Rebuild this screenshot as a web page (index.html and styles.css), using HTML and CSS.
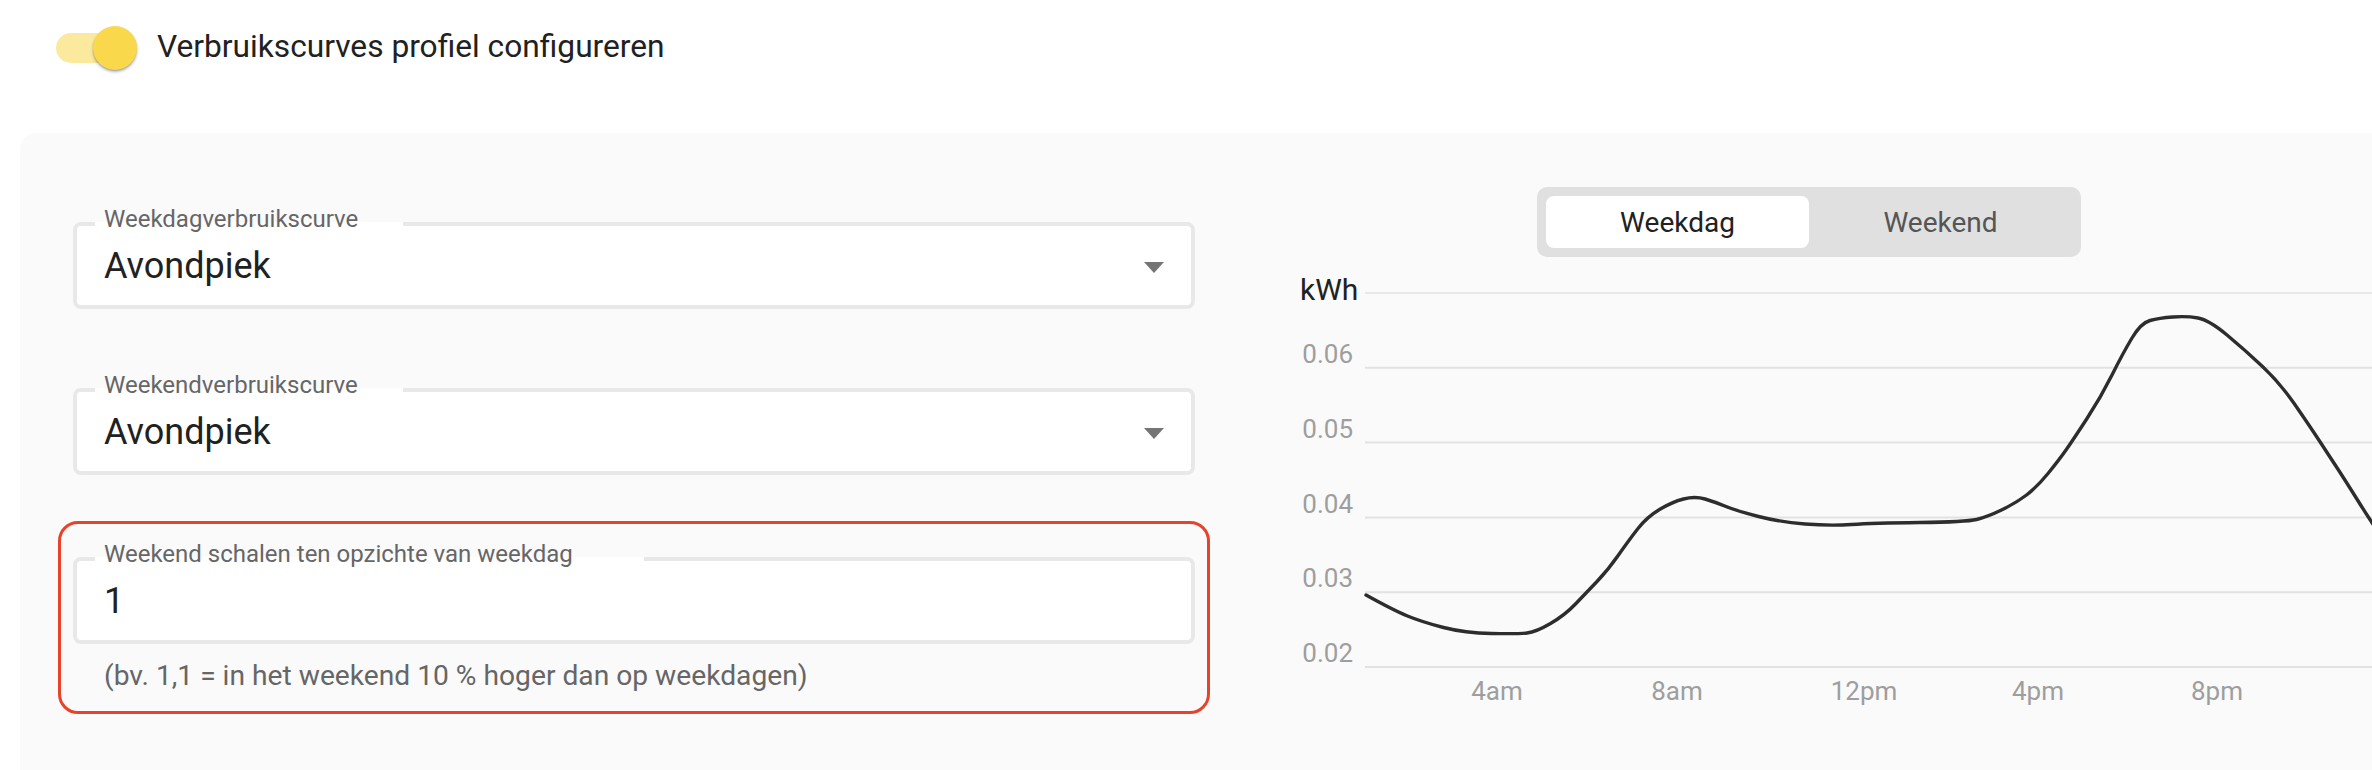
FILE: index.html
```html
<!DOCTYPE html>
<html lang="nl">
<head>
<meta charset="utf-8">
<title>Verbruikscurves</title>
<link rel="stylesheet" href="styles.css">
</head>
<body>
<header class="top">
  <span class="switch"><span class="switch-track"></span><span class="switch-thumb"></span></span>
  <span class="top-label">Verbruikscurves profiel configureren</span>
</header>
<section class="panel">
  <div class="form-col">
    <div class="field-box">
      <span class="field-label notch-sm">Weekdagverbruikscurve</span>
      <span class="field-value">Avondpiek</span>
      <span class="select-arrow"></span>
    </div>
    <div class="field-box field-gap">
      <span class="field-label notch-sm">Weekendverbruikscurve</span>
      <span class="field-value">Avondpiek</span>
      <span class="select-arrow"></span>
    </div>
    <div class="highlight">
      <div class="field-box">
        <span class="field-label notch-lg">Weekend schalen ten opzichte van weekdag</span>
        <span class="field-value">1</span>
      </div>
      <p class="helper">(bv. 1,1 = in het weekend 10 % hoger dan op weekdagen)</p>
    </div>
  </div>
  <div class="chart-col">
    <div class="seg">
      <span class="seg-btn seg-active">Weekdag</span>
      <span class="seg-btn">Weekend</span>
    </div>
    <svg class="chart" viewBox="0 0 1072 455" width="1072" height="455">
      <line class="grid grid-top" x1="65" y1="33" x2="1072" y2="33"/>
      <line class="grid" x1="65" y1="107.8" x2="1072" y2="107.8"/>
      <line class="grid" x1="65" y1="182.6" x2="1072" y2="182.6"/>
      <line class="grid" x1="65" y1="257.4" x2="1072" y2="257.4"/>
      <line class="grid" x1="65" y1="332.2" x2="1072" y2="332.2"/>
      <line class="grid" x1="65" y1="407" x2="1072" y2="407"/>
      <text class="unit" x="0" y="40">kWh</text>
      <text class="ytick" x="53" y="103">0.06</text>
      <text class="ytick" x="53" y="177.8">0.05</text>
      <text class="ytick" x="53" y="252.6">0.04</text>
      <text class="ytick" x="53" y="327.4">0.03</text>
      <text class="ytick" x="53" y="402.2">0.02</text>
      <text class="xtick" x="197" y="440">4am</text>
      <text class="xtick" x="377" y="440">8am</text>
      <text class="xtick" x="564" y="440">12pm</text>
      <text class="xtick" x="738" y="440">4pm</text>
      <text class="xtick" x="917" y="440">8pm</text>
      <path class="curve" d="M66,335 Q93,350 107.5,356 Q122,362 143.5,367.5 Q165,373 191.5,373.5 Q218,374 227,373 Q236,372 250.5,363.5 Q265,355 275.5,344 Q286,333 297,321.5 Q308,310 318.5,295 Q329,280 338,268.5 Q347,257 359.5,249.5 Q372,242 383.5,239 Q395,236 405,239 Q415,242 426,246.5 Q437,251 458.5,256.5 Q480,262 505,264 Q530,266 551.5,264.5 Q573,263 619.5,262.5 Q666,262 676.5,259.5 Q687,257 701.5,250 Q716,243 726.5,235 Q737,227 748,213.5 Q759,200 766,190 Q773,180 787,158.5 Q801,137 812,115 Q823,93 832,78 Q841,63 850,60.5 Q859,58 873,57 Q887,56 898,58 Q909,60 927,75 Q945,90 962.5,106.5 Q980,123 994.5,144 Q1009,165 1019.5,181 Q1030,197 1037.5,208.5 Q1045,220 1057.5,240 Q1070,260 1085,282.5 L1100,305"/>
    </svg>
  </div>
</section>
</body>
</html>
```
FILE: styles.css
```css
* { box-sizing: border-box; }
html, body { margin: 0; padding: 0; overflow: hidden; background: #ffffff; }
body {
  width: 2372px;
  height: 770px;
  font-family: Roboto, "Noto Sans", "Liberation Sans", sans-serif;
  color: #212121;
}

.top {
  display: flex;
  align-items: flex-start;
  gap: 20px;
  height: 133px;
  padding: 26px 0 0 56px;
}
.switch { position: relative; flex: none; width: 81px; height: 44px; }
.switch-track {
  position: absolute; left: 0; top: 7px;
  width: 75px; height: 30px; border-radius: 15px;
  background: #fbe99e;
}
.switch-thumb {
  position: absolute; right: 0; top: 0;
  width: 44px; height: 44px; border-radius: 50%;
  background: #f9d94b;
  box-shadow: 0 2px 3px rgba(0,0,0,0.28), 0 1px 1px rgba(0,0,0,0.12);
}
.top-label { font-size: 31.7px; line-height: 42px; color: #212121; }

.panel {
  display: flex;
  gap: 105px;
  height: 637px;
  margin-left: 20px;
  padding: 0 0 0 53px;
  background: #fafafa;
  border-top-left-radius: 16px;
  overflow: hidden;
}
.form-col { flex: none; width: 1122px; display: flex; flex-direction: column; padding-top: 89px; }

.field-box {
  position: relative;
  display: flex;
  align-items: center;
  height: 87px;
  padding: 0 27px;
  border: 4px solid #e8e8e8;
  border-radius: 8px;
  background: #ffffff;
}
.field-gap { margin-top: 79px; }
.field-label {
  position: absolute;
  left: 18px;
  top: -19px;
  padding-left: 9px;
  font-size: 24px;
  line-height: 24px;
  color: #666666;
  white-space: nowrap;
  background: linear-gradient(to bottom, transparent 15px, #ffffff 15px);
}
.notch-sm { width: 308px; }
.notch-lg { width: 549px; }
.field-value { flex: 1; font-size: 36px; color: #212121; }
.select-arrow {
  width: 0; height: 0;
  margin-top: 3px;
  border-left: 10.5px solid transparent;
  border-right: 10.5px solid transparent;
  border-top: 11px solid #757575;
}

.highlight {
  margin: 46px -15px 0;
  padding: 33px 12px 19px;
  border: 3px solid #e8432a;
  border-radius: 20px;
}
.helper {
  margin: 15px 0 0;
  padding-left: 31px;
  font-size: 28.2px;
  line-height: 33px;
  color: #666666;
}

.chart-col { flex: 1; min-width: 0; padding-top: 54px; }
.seg {
  display: flex;
  width: 544px;
  margin-left: 237px;
  padding: 9px;
  background: #e0e0e0;
  border-radius: 10px;
}
.seg-btn {
  display: flex;
  align-items: center;
  justify-content: center;
  width: 263px;
  height: 52px;
  border-radius: 8px;
  font-size: 28px;
  color: #555555;
}
.seg-active { background: #ffffff; color: #212121; }

.chart { display: block; margin-top: 3px; width: 1072px; height: 455px; overflow: hidden; }
.chart text { font-family: Roboto, "Noto Sans", "Liberation Sans", sans-serif; }
.grid { stroke: #e2e2e2; stroke-width: 2; }
.grid-top { stroke-width: 1.5; }
.unit { font-size: 30px; fill: #212121; }
.ytick { font-size: 26px; fill: #9e9e9e; text-anchor: end; }
.xtick { font-size: 26px; fill: #9e9e9e; text-anchor: middle; }
.curve { fill: none; stroke: #2d2d2d; stroke-width: 3.4; stroke-linejoin: round; stroke-linecap: round; }
```
